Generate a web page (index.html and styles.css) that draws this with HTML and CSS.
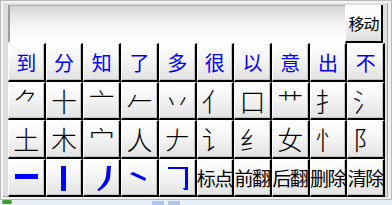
FILE: index.html
```html
<!DOCTYPE html>
<html lang="zh-CN">
<head>
    <meta charset="UTF-8">
    <title>手写输入</title>
    <link rel="stylesheet" href="styles.css">
</head>
<body>
    <div class="panel">
        <div class="top-row">
            <div class="input-box"></div>
            <button class="move-btn">移动</button>
        </div>
        <div class="keys">
            <!-- common characters -->
            <button class="key word">到</button>
            <button class="key word">分</button>
            <button class="key word">知</button>
            <button class="key word">了</button>
            <button class="key word">多</button>
            <button class="key word">很</button>
            <button class="key word">以</button>
            <button class="key word">意</button>
            <button class="key word">出</button>
            <button class="key word">不</button>
            <!-- radicals -->
            <button class="key radical">⺈</button>
            <button class="key radical">十</button>
            <button class="key radical">亠</button>
            <button class="key radical">𠂉</button>
            <button class="key radical">丷</button>
            <button class="key radical">亻</button>
            <button class="key radical">口</button>
            <button class="key radical">艹</button>
            <button class="key radical">扌</button>
            <button class="key radical">氵</button>
            <button class="key radical">土</button>
            <button class="key radical">木</button>
            <button class="key radical">宀</button>
            <button class="key radical">人</button>
            <button class="key radical">𠂇</button>
            <button class="key radical">讠</button>
            <button class="key radical">纟</button>
            <button class="key radical">女</button>
            <button class="key radical">忄</button>
            <button class="key radical">阝</button>
            <!-- strokes -->
            <button class="key stroke" title="横">
                <svg width="36" height="36" viewBox="0 0 36 36"><rect x="7" y="15" width="23" height="5" fill="#0000ff"/></svg>
            </button>
            <button class="key stroke" title="竖">
                <svg width="36" height="36" viewBox="0 0 36 36"><rect x="15" y="7" width="5" height="25" fill="#0000ff"/></svg>
            </button>
            <button class="key stroke" title="撇">
                <svg width="36" height="36" viewBox="0 0 36 36"><path d="M23 7 L27 7 L26 19 Q24 27 15 32 L13 31 Q21 24 22 17 Z" fill="#0000ff"/></svg>
            </button>
            <button class="key stroke" title="点">
                <svg width="36" height="36" viewBox="0 0 36 36"><path d="M9 15 L12 13 L25 19 L24 22 Z" fill="#0000ff"/></svg>
            </button>
            <button class="key stroke" title="折">
                <svg width="36" height="36" viewBox="0 0 36 36"><path d="M9 8 L29 8 L29 31 L25 31 L24 29 L26 29 L26 10 L9 10 Z" fill="#0000ff"/></svg>
            </button>
            <button class="key cmd">标点</button>
            <button class="key cmd">前翻</button>
            <button class="key cmd">后翻</button>
            <button class="key cmd">删除</button>
            <button class="key cmd">清除</button>
        </div>
    </div>
    <div class="taskbar">
        <span class="tray-icon"></span>
        <span class="task task-a"></span>
        <span class="task task-b"></span>
    </div>
</body>
</html>
```

FILE: styles.css
```css
body {
    margin: 0;
    width: 392px;
    height: 205px;
    overflow: hidden;
    background-color: #e8eef6;
    font-family: "Noto Sans CJK SC", "Liberation Sans", sans-serif;
}
.panel {
    box-sizing: border-box;
    width: 392px;
    height: 200px;
    padding: 4px 6px 2px 7px;
    background-color: #dedede;
    border: 1px solid #b8b8b8;
    box-shadow: inset 2px 2px 0 #f4f4f4, inset -3px -2px 0 #f0f0f0, inset -4px -3px 0 #a8a8a8;
    display: flex;
    flex-direction: column;
}
.top-row {
    height: 38px;
    display: flex;
}
.input-box {
    flex: 1;
    border-left: 2px solid #9c9c9c;
    border-top: 1px solid #a8a8a8;
    border-bottom: 2px solid #ffffff;
    background: linear-gradient(#d4d4d4, #f0f0f0 45%, #ffffff);
}
.move-btn {
    width: 38px;
    margin-right: 2px;
    padding: 0;
    border: none;
    border-right: 2px solid #000;
    border-bottom: 2px solid #000;
    border-left: 1px solid #fff;
    background: linear-gradient(#ffffff, #f2f2f2 60%, #dcdcdc);
    font-family: inherit;
    font-size: 16px;
    color: #000;
    letter-spacing: -1px;
    white-space: nowrap;
}
.keys {
    height: 154px;
    display: grid;
    grid-template-columns: repeat(10, minmax(0, 1fr));
    grid-template-rows: repeat(4, minmax(0, 1fr));
}
.key {
    box-sizing: border-box;
    min-width: 0;
    margin: 0;
    padding: 0;
    border: none;
    border-top: 1px solid #ffffff;
    border-left: 1px solid #ffffff;
    border-right: 2px solid #000;
    border-bottom: 2px solid #000;
    box-shadow: inset -1px -1px 0 #c4c4c4;
    background: linear-gradient(#ffffff, #f6f6f6 40%, #e2e2e2);
    font-family: inherit;
    color: #000;
    display: flex;
    align-items: center;
    justify-content: center;
    overflow: visible;
    white-space: nowrap;
}
.word {
    color: #0000ff;
    font-size: 20px;
    padding-top: 2px;
}
.radical {
    font-size: 26px;
    font-weight: 300;
}
.stroke svg {
    display: block;
    flex: none;
}
.cmd {
    font-size: 19px;
    letter-spacing: -1.5px;
    padding-right: 1px;
}
.taskbar {
    position: relative;
    height: 5px;
}
.tray-icon {
    position: absolute;
    left: 2px;
    top: 0;
    width: 10px;
    height: 4px;
    background-color: #3c9c2c;
    border-radius: 2px;
}
.task {
    position: absolute;
    top: 1px;
    height: 4px;
    background-color: #a9c6ee;
}
.task-a {
    left: 152px;
    width: 12px;
}
.task-b {
    left: 168px;
    width: 12px;
}
```
